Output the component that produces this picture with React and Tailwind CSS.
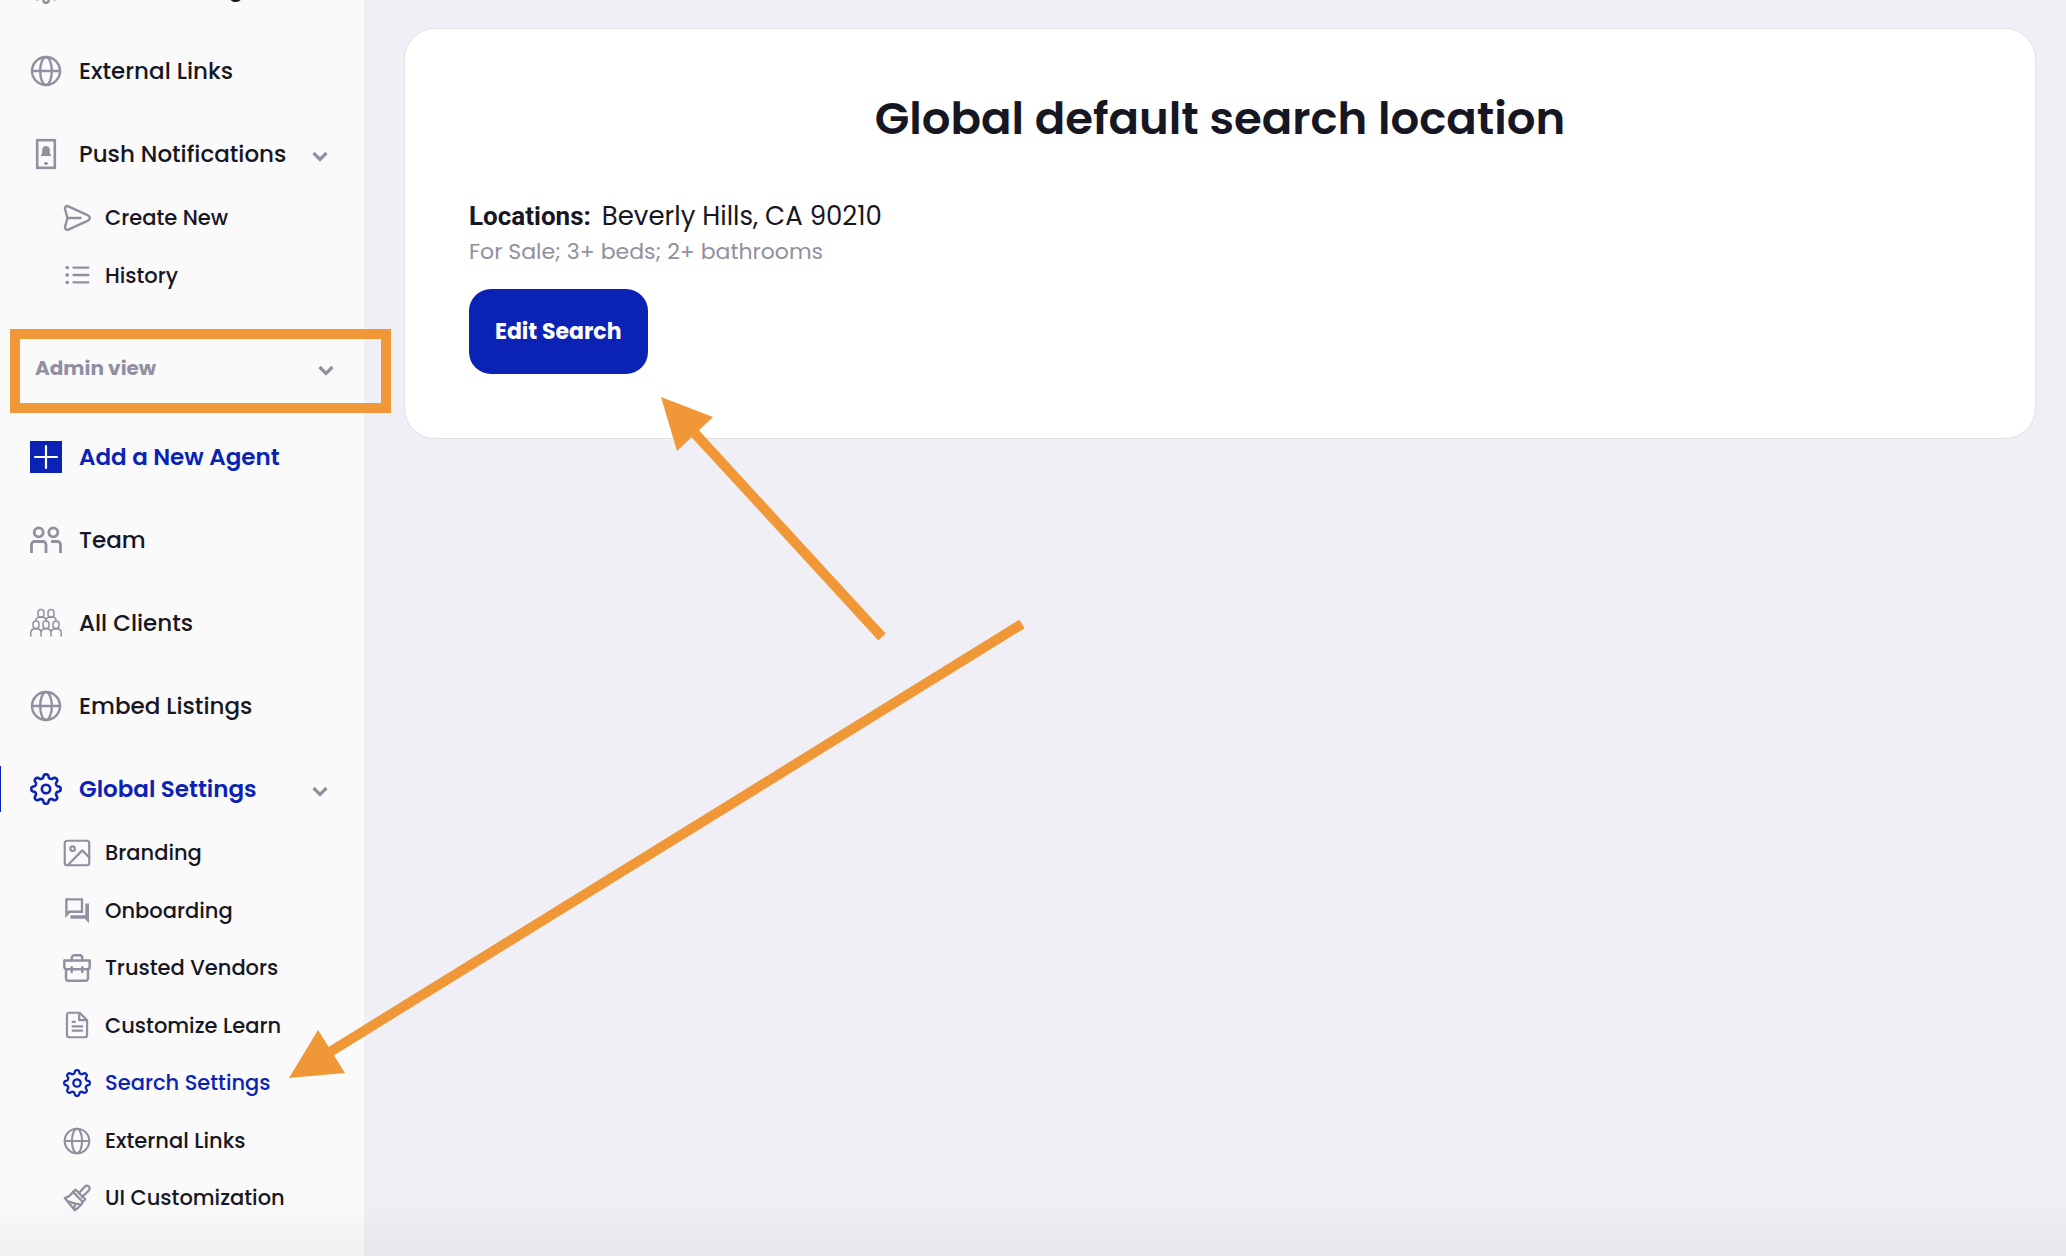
const stroke = {
  fill: "none",
  stroke: "currentColor",
  strokeLinecap: "round",
  strokeLinejoin: "round",
};

function Icon({ children, small }) {
  return (
    <svg
      viewBox="0 0 32 32"
      aria-hidden="true"
      className={small ? "size-7 shrink-0" : "size-8 shrink-0"}
    >
      {children}
    </svg>
  );
}

// Outline of an eight-toothed cog with rounded teeth
const cogOutline =
  Array.from({ length: 192 }, (_, i) => {
    const a = (i / 192) * Math.PI * 2;
    const r = 12.9 + 1.9 * Math.tanh(1.7 * Math.cos(8 * a));
    const x = (16 + r * Math.sin(a)).toFixed(2);
    const y = (16 - r * Math.cos(a)).toFixed(2);
    return `${i ? "L" : "M"}${x} ${y}`;
  }).join("") + "Z";

const Cog = () => (
  <g {...stroke} strokeWidth="2.6">
    <path d={cogOutline} />
    <circle cx="16" cy="16" r="4.2" />
  </g>
);

const Globe = () => (
  <g {...stroke} strokeWidth="2.4">
    <circle cx="16" cy="16" r="14" />
    <ellipse cx="16" cy="16" rx="5.8" ry="14" />
    <path d="M2 16h28" />
  </g>
);

const Phone = () => (
  <g>
    <rect x="7.2" y="2.2" width="17.6" height="27.6" fill="none" stroke="currentColor" strokeWidth="2.6" />
    <path
      d="M16 8c-2.700 0-3.800 1.800-3.800 4.200v3.200L11 16.800v1.200h10v-1.200l-1.200-1.400v-3.200C19.800 9.800 18.700 8 16 8z"
      fill="currentColor"
    />
    <ellipse cx="16" cy="25.500" rx="2" ry="1.400" fill="currentColor" />
  </g>
);

const Send = () => (
  <g {...stroke} strokeWidth="2.800">
    <path d="M6 2.600 28 12.600C31.500 14.500 31.500 17.500 28 19.400L6 29.200C3.600 30 1.900 28.400 2.400 26L4.600 18C5 16.500 5 15.500 4.600 14L2.400 6C1.900 3.600 3.600 1.800 6 2.600Z" />
    <path d="M5 16h15" />
  </g>
);

const List = () => (
  <g {...stroke} strokeWidth="2.600">
    <path d="M12 7.500h17M12 16h17M12 24.500h17" />
    <path d="M4.500 7.500h.6M4.500 16h.6M4.500 24.500h.6" strokeWidth="3.800" />
  </g>
);

const Team = () => (
  <g fill="none" stroke="currentColor" strokeWidth="2.800">
    <circle cx="8.700" cy="8.300" r="4.500" />
    <circle cx="23.300" cy="8.300" r="4.500" />
    <path d="M1.500 29v-8.500a3 3 0 0 1 3-3h8.500a3 3 0 0 1 3 3V29" />
    <path d="M21 17.500h6.500a3 3 0 0 1 3 3V29" />
  </g>
);

const Crowd = () => (
  <g {...stroke} strokeWidth="1.500">
    <rect x="8" y="2.600" width="6" height="7.600" rx="3" />
    <rect x="18" y="2.600" width="6" height="7.600" rx="3" />
    <rect x="3" y="14" width="6" height="7.600" rx="3" />
    <rect x="13" y="14" width="6" height="7.600" rx="3" />
    <rect x="23" y="14" width="6" height="7.600" rx="3" />
    <path d="M6 13c0-2.200 1.500-3 5-3s5 1 5 3.500c0-2.500 1.500-3.500 5-3.500s5 .8 5 3" />
    <path d="M.8 29v-3.500c0-2.600 1.700-3.700 5.200-3.700s5 1.100 5 3.700V29M11 25.500c0-2.600 1.500-3.700 5-3.700s5 1.100 5 3.700V29M21 25.500c0-2.600 1.500-3.700 5-3.700s5.200 1.100 5.200 3.700V29" />
  </g>
);

const Plus = () => (
  <g>
    <rect width="32" height="32" fill="currentColor" />
    <path d="M16 5v22M5 16h22" stroke="white" strokeWidth="2.200" strokeLinecap="round" />
  </g>
);

const Picture = () => (
  <g {...stroke} strokeWidth="2.500">
    <rect x="2" y="2" width="28" height="28" rx="3" />
    <circle cx="11" cy="11" r="2.600" />
    <path d="M6 29.500 22 13l8 8" />
  </g>
);

const Chat = () => (
  <path
    fill="currentColor"
    fillRule="evenodd"
    d="M2.500 2.500h20.500v17H8L2.500 25V2.500zm2.700 2.700v12.300l1.300-1H20.400V5.200H5.200zM25.500 8.500h4.200V31L25 26H8.500V22h17V8.500z"
  />
);

const Briefcase = () => (
  <g {...stroke} strokeWidth="2.800">
    <path d="M10 7V4.500a3 3 0 0 1 3-3h6a3 3 0 0 1 3 3V7" />
    <path d="M1.500 7.500h29v7a3 3 0 0 1-3 3h-23a3 3 0 0 1-3-3z" />
    <path d="M3.500 17.500V28a2.500 2.500 0 0 0 2.500 2.500h20a2.500 2.500 0 0 0 2.500-2.500V17.500" />
    <path d="M10 15v5.500M22 15v5.500" />
  </g>
);

const Document = () => (
  <g {...stroke} strokeWidth="2.500">
    <path d="M7 2h12l8.500 8.500V27.500a2.500 2.500 0 0 1-2.500 2.500H7a2.500 2.500 0 0 1-2.500-2.500V4.500A2.500 2.500 0 0 1 7 2z" />
    <path d="M18.500 2.500v8h8.500M11 12.500h2.500M11 17.500h11M11 22.500h11" />
  </g>
);

const Brush = () => (
  <g {...stroke} strokeWidth="2.600">
    <path d="M18 10.500 25 3a3 3 0 0 1 4.500 4.500L21.500 15" />
    <path d="M11.500 9 14.500 6.500 25.500 17.500 22.500 20.500z" />
    <path d="M11.500 9C9 13 6.500 15 2 16l11.500 14c5-3.500 8-6 9-9.500M5 19.500l9 3-1.500 6M14 22.500l7 1" />
  </g>
);

function Chevron() {
  return (
    <svg viewBox="0 0 16 16" aria-hidden="true" className="mt-1.5 size-4 shrink-0 text-[#9190a0]">
      <path d="m1.500 4 6.500 6.500L14.500 4" fill="none" stroke="currentColor" strokeWidth="3.200" />
    </svg>
  );
}

const item = "flex h-12 w-full items-center gap-[17px] pr-9 pl-[30px] text-left text-[23px] whitespace-nowrap";

function NavLink({ icon, label, accent }) {
  return (
    <li className="mb-[35px]">
      <a href="#" className={`${item} ${accent ? "font-semibold text-[#0a23b4]" : "font-medium"}`}>
        <span className={accent ? "text-[#0a23b4]" : "text-[#9190a0]"}>
          <Icon>{icon}</Icon>
        </span>
        {label}
      </a>
    </li>
  );
}

function NavGroup({ icon, label, accent, listClass, links }) {
  return (
    <li>
      <button
        type="button"
        aria-expanded="true"
        className={`${item} relative ${accent ? "font-semibold text-[#0a23b4]" : "font-medium"}`}
      >
        {accent && <span className="absolute inset-y-px left-0 w-px bg-[#0a23b4]" />}
        <span className={accent ? "text-[#0a23b4]" : "text-[#9190a0]"}>
          <Icon>{icon}</Icon>
        </span>
        <span className="flex-1">{label}</span>
        <Chevron />
      </button>
      <ul className={`mt-[11px] grid auto-rows-fr ${listClass}`}>
        {links.map(([name, glyph, active]) => (
          <li key={name} className="flex">
            <a
              href="#"
              className={`flex flex-1 items-center gap-[14px] pl-[63px] text-[21px] font-medium whitespace-nowrap ${
                active ? "text-[#0a23b4]" : ""
              }`}
            >
              <span className={active ? "text-[#0a23b4]" : "text-[#9190a0]"}>
                <Icon small>{glyph}</Icon>
              </span>
              {name}
            </a>
          </li>
        ))}
      </ul>
    </li>
  );
}

function Sidebar() {
  return (
    <nav className="w-[364px] shrink-0 overflow-hidden bg-[#fafafa]">
      <ul className="-mt-9">
        <NavLink icon={<Cog />} label="Mobile Settings" />
        <NavLink icon={<Globe />} label="External Links" />
        <NavGroup
          icon={<Phone />}
          label="Push Notifications"
          listClass="h-[115px]"
          links={[
            ["Create New", <Send />],
            ["History", <List />],
          ]}
        />
      </ul>
      <button
        type="button"
        aria-expanded="true"
        className="mt-10 flex h-12 w-full items-center justify-between pr-[30px] pl-[35px] text-[20px] font-bold text-[#9190a0]"
      >
        Admin view
        <Chevron />
      </button>
      <ul className="mt-[41px]">
        <NavLink icon={<Plus />} label="Add a New Agent" accent />
        <NavLink icon={<Team />} label="Team" />
        <NavLink icon={<Crowd />} label="All Clients" />
        <NavLink icon={<Globe />} label="Embed Listings" />
        <NavGroup
          icon={<Cog />}
          label="Global Settings"
          accent
          listClass="h-[403px]"
          links={[
            ["Branding", <Picture />],
            ["Onboarding", <Chat />],
            ["Trusted Vendors", <Briefcase />],
            ["Customize Learn", <Document />],
            ["Search Settings", <Cog />, true],
            ["External Links", <Globe />],
            ["UI Customization", <Brush />],
          ]}
        />
      </ul>
    </nav>
  );
}

// Orange call-outs drawn over the page
function Annotations() {
  return (
    <div className="pointer-events-none absolute inset-0 overflow-hidden" aria-hidden="true">
      <div className="absolute top-[329px] left-[10px] h-[84px] w-[381px] border-10 border-[#f09837]" />
      <svg width="1040" height="1100" className="absolute top-0 left-0 text-[#f09837]">
        <path d="M661 397 713 417 677 451Z" fill="currentColor" />
        <path d="M690 428 882 637" stroke="currentColor" strokeWidth="10" />
        <path d="M289 1078 318 1030 345 1073Z" fill="currentColor" />
        <path d="M325 1055 1022 624" stroke="currentColor" strokeWidth="10" />
      </svg>
      <div className="absolute inset-x-0 bottom-0 h-14 bg-linear-to-b from-transparent to-black/4" />
    </div>
  );
}

export default function App() {
  return (
    <div className="relative flex h-screen overflow-hidden bg-[#f0eff5] font-[Poppins,Inter,sans-serif] text-[#171623]">
      <Sidebar />
      <main className="min-w-0 flex-1 pt-7 pr-[30px] pl-10">
        <section className="flex flex-col items-start rounded-[31px] border border-[#e1e0e7] bg-white px-16 py-16">
          <h1 className="w-full text-center text-[45px] leading-[52px] font-semibold">
            Global default search location
          </h1>
          <p className="mt-[55px] flex items-baseline gap-[11px] text-[26px] leading-8">
            <strong className="font-[Roboto,sans-serif] font-bold">Locations:</strong>
            Beverly Hills, CA 90210
          </p>
          <p className="mt-1 text-[22px] leading-8 text-[#9190a0]">For Sale; 3+ beds; 2+ bathrooms</p>
          <button
            type="button"
            className="mt-[21px] h-[85px] rounded-[22px] bg-[#0a23b4] px-[26px] text-[22px] font-bold text-white"
          >
            Edit Search
          </button>
        </section>
      </main>
      <Annotations />
    </div>
  );
}
